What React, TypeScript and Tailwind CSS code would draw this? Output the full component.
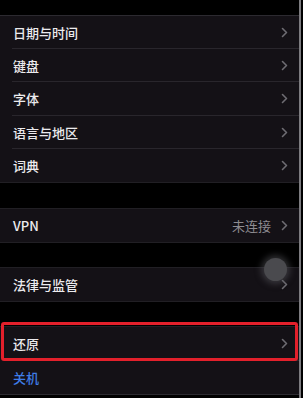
import React from "react";

const Chevron = () => (
  <svg width="7" height="11" viewBox="0 0 7 11" fill="none">
    <path d="M1.5 1.5L5.5 5.5L1.5 9.5" stroke="#6e6c72" strokeWidth="1.6" strokeLinecap="round" strokeLinejoin="round" />
  </svg>
);

const Row = ({ label, value, last, blue, h = "h-[33px]" }: { label: string; value?: string; last?: boolean; blue?: boolean; h?: string }) => (
  <div className={`${h} flex items-center bg-[#141116] pl-[12px]`}>
    <div className={`flex h-full flex-1 items-center pr-[11px] ${last ? "" : "border-b border-[#29262c]"}`}>
      <span className={`flex-1 pl-[1px] text-[13px] font-medium leading-none ${blue ? "text-[#3f7de8]" : "text-[#ecebee]"}`}>{label}</span>
      {value && <span className="mr-[10px] text-[13px] leading-none text-[#8d8b90]">{value}</span>}
      {!blue && <Chevron />}
    </div>
  </div>
);

export default function App() {
  return (
    <div className="relative flex h-[398px] w-[303px] overflow-hidden bg-black" style={{ fontFamily: '"Noto Sans CJK SC", "Noto Sans", sans-serif' }}>
      <div className="flex flex-1 flex-col">
        <div className="h-[16px] border-b border-[#2c2a30]" />
        <Row label="日期与时间" />
        <Row label="键盘" />
        <Row label="字体" h="h-[34px]" />
        <Row label="语言与地区" />
        <Row label="词典" last />
        <div className="h-[27px] border-y border-[#211f24] bg-black" />
        <Row label="VPN" value="未连接" last h="h-[33px]" />
        <div className="h-[26px] border-y border-[#211f24] bg-black" />
        <Row label="法律与监管" last />
        <div className="h-[26px] border-y border-[#211f24] bg-black" />
        <Row label="还原" h="h-[34px]" />
        <Row label="关机" blue last />
        <div className="flex-1 border-t border-[#2c2a30] bg-black" />
      </div>
      <div className="w-[2px] bg-[#7d7c80]" />
      <div className="w-[2px] bg-black" />
      <div className="absolute left-[1px] top-[322px] h-[39px] w-[297px] rounded-[3px] border-[3px] border-[#e3202b]" />
      <div className="absolute left-[264px] top-[258px] h-[23px] w-[23px] rounded-full bg-[#4a4a4e] shadow-[0_0_6px_3px_rgba(90,90,95,0.5)]" />
    </div>
  );
}
